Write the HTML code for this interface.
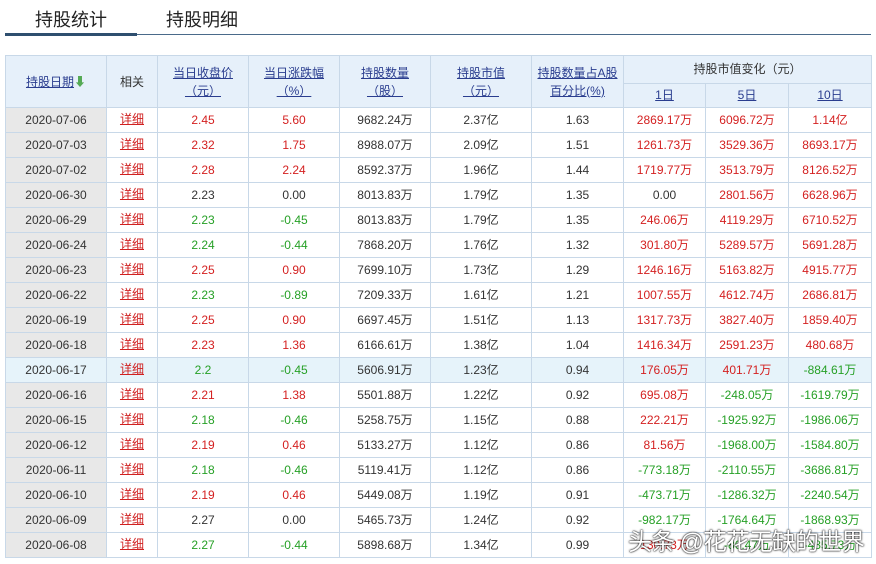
<!DOCTYPE html><html><head><meta charset="utf-8"><style>
body{margin:0;background:#fff;font-family:"Liberation Sans","Noto Sans CJK SC",sans-serif;width:876px;height:564px;overflow:hidden;position:relative}
.tab{position:absolute;top:6px;font-size:18px;color:#222}
.ul{position:absolute;left:5px;top:33px;width:132px;height:3px;background:#2f4f6f}
.ln{position:absolute;left:137px;top:34px;width:734px;height:1px;background:#4a6a8a}
table{position:absolute;left:5px;top:55px;border-collapse:collapse;font-size:12px;color:#333}
td,th{border:1px solid #c8d8e8;text-align:center;padding:0;font-weight:normal;line-height:16px;vertical-align:middle}
th{background:#e6f0fa;color:#333;line-height:18px}
th a,td a{color:#2a3d8f;text-decoration:underline}
td{height:24px}
td.d{background:#e8e8e8}
td a.x{color:#d02020;position:relative;top:-1px}
.r{color:#d42020}.g{color:#26a026}
tr.h td{background:#e6f3fa}
.wm{position:absolute;left:628px;top:522px;font-size:24px;color:#fff;text-shadow:0 0 2px #000,0 0 1px #000;letter-spacing:-1px}
</style></head><body>
<div class="tab" style="left:35px">持股统计</div>
<div class="tab" style="left:166px">持股明细</div>
<div class="ul"></div><div class="ln"></div>
<table>
<colgroup><col style="width:101px"><col style="width:51px"><col style="width:91px"><col style="width:91px"><col style="width:91px"><col style="width:101px"><col style="width:92px"><col style="width:82px"><col style="width:83px"><col style="width:83px"></colgroup>
<tr style="height:27px"><th rowspan="2" style="height:51px"><a>持股日期</a><span style="color:#5a5">&#x2B07;</span></th><th rowspan="2">相关</th><th rowspan="2"><a>当日收盘价</a><br><a>（元）</a></th><th rowspan="2"><a>当日涨跌幅</a><br><a>（%）</a></th><th rowspan="2"><a>持股数量</a><br><a>（股）</a></th><th rowspan="2"><a>持股市值</a><br><a>（元）</a></th><th rowspan="2"><a>持股数量占A股</a><br><a>百分比(%)</a></th><th colspan="3">持股市值变化（元）</th></tr>
<tr style="height:24px"><th><a>1日</a></th><th><a>5日</a></th><th><a>10日</a></th></tr>
<tr><td class="d">2020-07-06</td><td><a class="x">详细</a></td><td class="r">2.45</td><td class="r">5.60</td><td>9682.24万</td><td>2.37亿</td><td>1.63</td><td class="r">2869.17万</td><td class="r">6096.72万</td><td class="r">1.14亿</td></tr>
<tr><td class="d">2020-07-03</td><td><a class="x">详细</a></td><td class="r">2.32</td><td class="r">1.75</td><td>8988.07万</td><td>2.09亿</td><td>1.51</td><td class="r">1261.73万</td><td class="r">3529.36万</td><td class="r">8693.17万</td></tr>
<tr><td class="d">2020-07-02</td><td><a class="x">详细</a></td><td class="r">2.28</td><td class="r">2.24</td><td>8592.37万</td><td>1.96亿</td><td>1.44</td><td class="r">1719.77万</td><td class="r">3513.79万</td><td class="r">8126.52万</td></tr>
<tr><td class="d">2020-06-30</td><td><a class="x">详细</a></td><td>2.23</td><td>0.00</td><td>8013.83万</td><td>1.79亿</td><td>1.35</td><td>0.00</td><td class="r">2801.56万</td><td class="r">6628.96万</td></tr>
<tr><td class="d">2020-06-29</td><td><a class="x">详细</a></td><td class="g">2.23</td><td class="g">-0.45</td><td>8013.83万</td><td>1.79亿</td><td>1.35</td><td class="r">246.06万</td><td class="r">4119.29万</td><td class="r">6710.52万</td></tr>
<tr><td class="d">2020-06-24</td><td><a class="x">详细</a></td><td class="g">2.24</td><td class="g">-0.44</td><td>7868.20万</td><td>1.76亿</td><td>1.32</td><td class="r">301.80万</td><td class="r">5289.57万</td><td class="r">5691.28万</td></tr>
<tr><td class="d">2020-06-23</td><td><a class="x">详细</a></td><td class="r">2.25</td><td class="r">0.90</td><td>7699.10万</td><td>1.73亿</td><td>1.29</td><td class="r">1246.16万</td><td class="r">5163.82万</td><td class="r">4915.77万</td></tr>
<tr><td class="d">2020-06-22</td><td><a class="x">详细</a></td><td class="g">2.23</td><td class="g">-0.89</td><td>7209.33万</td><td>1.61亿</td><td>1.21</td><td class="r">1007.55万</td><td class="r">4612.74万</td><td class="r">2686.81万</td></tr>
<tr><td class="d">2020-06-19</td><td><a class="x">详细</a></td><td class="r">2.25</td><td class="r">0.90</td><td>6697.45万</td><td>1.51亿</td><td>1.13</td><td class="r">1317.73万</td><td class="r">3827.40万</td><td class="r">1859.40万</td></tr>
<tr><td class="d">2020-06-18</td><td><a class="x">详细</a></td><td class="r">2.23</td><td class="r">1.36</td><td>6166.61万</td><td>1.38亿</td><td>1.04</td><td class="r">1416.34万</td><td class="r">2591.23万</td><td class="r">480.68万</td></tr>
<tr class="h"><td class="d" style="background:#e6f3fa">2020-06-17</td><td><a class="x">详细</a></td><td class="g">2.2</td><td class="g">-0.45</td><td>5606.91万</td><td>1.23亿</td><td>0.94</td><td class="r">176.05万</td><td class="r">401.71万</td><td class="g">-884.61万</td></tr>
<tr><td class="d">2020-06-16</td><td><a class="x">详细</a></td><td class="r">2.21</td><td class="r">1.38</td><td>5501.88万</td><td>1.22亿</td><td>0.92</td><td class="r">695.08万</td><td class="g">-248.05万</td><td class="g">-1619.79万</td></tr>
<tr><td class="d">2020-06-15</td><td><a class="x">详细</a></td><td class="g">2.18</td><td class="g">-0.46</td><td>5258.75万</td><td>1.15亿</td><td>0.88</td><td class="r">222.21万</td><td class="g">-1925.92万</td><td class="g">-1986.06万</td></tr>
<tr><td class="d">2020-06-12</td><td><a class="x">详细</a></td><td class="r">2.19</td><td class="r">0.46</td><td>5133.27万</td><td>1.12亿</td><td>0.86</td><td class="r">81.56万</td><td class="g">-1968.00万</td><td class="g">-1584.80万</td></tr>
<tr><td class="d">2020-06-11</td><td><a class="x">详细</a></td><td class="g">2.18</td><td class="g">-0.46</td><td>5119.41万</td><td>1.12亿</td><td>0.86</td><td class="g">-773.18万</td><td class="g">-2110.55万</td><td class="g">-3686.81万</td></tr>
<tr><td class="d">2020-06-10</td><td><a class="x">详细</a></td><td class="r">2.19</td><td class="r">0.46</td><td>5449.08万</td><td>1.19亿</td><td>0.91</td><td class="g">-473.71万</td><td class="g">-1286.32万</td><td class="g">-2240.54万</td></tr>
<tr><td class="d">2020-06-09</td><td><a class="x">详细</a></td><td>2.27</td><td>0.00</td><td>5465.73万</td><td>1.24亿</td><td>0.92</td><td class="g">-982.17万</td><td class="g">-1764.64万</td><td class="g">-1868.93万</td></tr>
<tr><td class="d">2020-06-08</td><td><a class="x">详细</a></td><td class="g">2.27</td><td class="g">-0.44</td><td>5898.68万</td><td>1.34亿</td><td>0.99</td><td class="r">130.73万</td><td class="g">-86.47万</td><td class="g">-485.73万</td></tr>
</table>
<div class="wm">头条 @花花无缺的世界</div>
</body></html>
